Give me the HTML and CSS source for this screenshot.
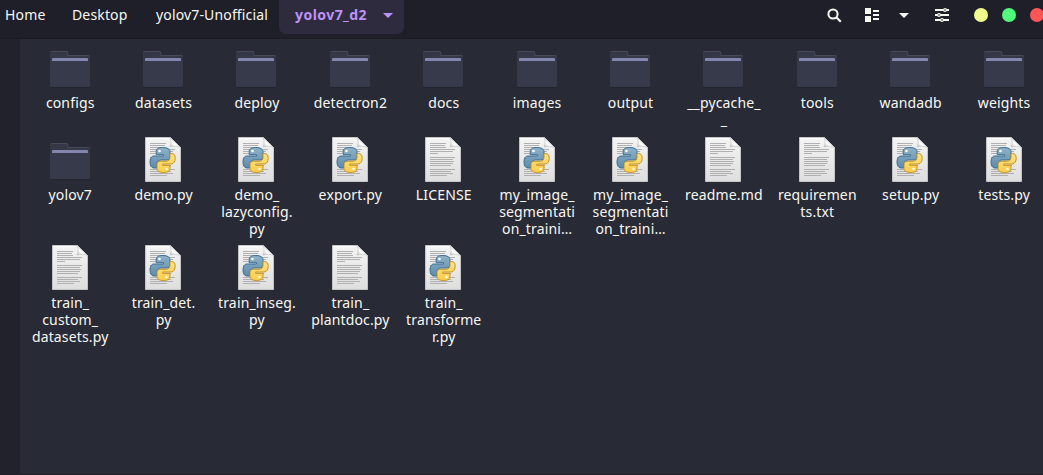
FILE: index.html
```html
<!DOCTYPE html>
<html lang="en">
<head>
<meta charset="utf-8">
<title>yolov7_d2</title>
<link rel="stylesheet" href="styles.css">
</head>
<body>
<svg class="defs" width="0" height="0">
  <defs>
    <linearGradient id="paper" x1="0" y1="0" x2="0" y2="1"><stop offset="0" stop-color="#f4f4f4"/><stop offset="1" stop-color="#dedede"/></linearGradient>
    <linearGradient id="fold" x1="0" y1="1" x2="1" y2="0"><stop offset="0" stop-color="#b4b4b4"/><stop offset=".35" stop-color="#fff"/><stop offset="1" stop-color="#d0d0d0"/></linearGradient>
    <linearGradient id="blue" x1="0" y1="0" x2="0" y2="1"><stop offset="0" stop-color="#8fb2c9"/><stop offset="1" stop-color="#5c8bab"/></linearGradient>
    <linearGradient id="gold" x1="0" y1="0" x2="0" y2="1"><stop offset="0" stop-color="#fce28c"/><stop offset="1" stop-color="#fbcd4a"/></linearGradient>
    <symbol id="folder" viewBox="0 0 48 48">
      <path d="M4 8.500a1.500 1.500 0 0 1 1.500-1.500h15.500a1.500 1.500 0 0 1 1 1.500V11h20.500a1.500 1.500 0 0 1 1.500 1.500V30H4z" fill="#343746"/>
      <path d="M4.500 8.500a1 1 0 0 1 1-1H21a1 1 0 0 1 .7 1v3h21a1 1 0 0 1 1 1" fill="none" stroke="#464958"/>
      <path d="M6 15a1 1 0 0 1 1-1h34a1 1 0 0 1 1 1v3H6z" fill="#8387ae"/>
      <path d="M4 17h40v25.500a1.500 1.500 0 0 1-1.500 1.500h-37A1.500 1.500 0 0 1 4 42.500z" fill="#22242e"/>
      <path d="M4 17h40v24.500a1.500 1.500 0 0 1-1.500 1.500h-37A1.500 1.500 0 0 1 4 41.500z" fill="#373a4b"/>
    </symbol>
    <symbol id="sheet" viewBox="0 0 48 48">
      <path d="M6.500 1.500h25l10 10v34h-35z" fill="url(#paper)" stroke="#c4c4c2"/>
      <path d="M7.500 2.500h23" stroke="#fff"/>
      <path d="M31 1.500c1.500 3 1.500 6 0 9.500 4-1.200 7-1 10.500.5z" fill="url(#fold)" stroke="#bdbdbd" stroke-width=".6"/>
    </symbol>
    <symbol id="text" viewBox="0 0 48 48">
      <use href="#sheet" width="48" height="48"/>
      <path d="M11 7.500h16M11 9.500h15M11 11.500h16M11 13.500h25M11 15.500h23M11 17.500h8M11 21.500h25M11 23.500h23M11 25.500h24M11 27.500h23M11 29.500h21M11 33.500h25M11 35.500h21M11 37.500h23M11 39.500h17" stroke="#b0b0b0"/>
    </symbol>
    <symbol id="python" viewBox="0 0 48 48">
      <use href="#sheet" width="48" height="48"/>
      <path d="M11 7.500h16M11 9.500h15M11 11.500h16M11 13.500h25M11 15.500h23M11 17.500h8M11 21.500h25M11 23.500h23M11 25.500h24M11 27.500h23M11 29.500h21M11 33.500h25M11 35.500h21M11 37.500h23M11 39.500h17" stroke="#b0b0b0"/>
      <path d="M23.500 11.500c-5 0-6.300 1.800-6.300 4.200v3h7.300V20h-9.700c-2.700 0-3.800 3.200-3.800 6.200s1.300 5.800 3.800 5.800H18v-3.600c0-2.800 1.900-4.400 4.500-4.400h5.300c2 0 3.200-1.500 3.200-3.400v-4.900c0-2.700-2.800-4.200-7.500-4.200z" fill="url(#blue)" stroke="#3d6e92"/>
      <path d="M24.500 36.500c5 0 6.500-1.800 6.500-4.200v-3h-7.300V28h8.500c2.800 0 4-3.200 4-5.800 0-3.500-1.500-4.700-4-4.700H31v3.800c0 2.300-1.400 3.900-4 3.900h-5.600c-2.200 0-3.400 1.500-3.400 3.400v4c0 2.600 2.500 3.900 6.500 3.900z" fill="url(#gold)" stroke="#c8941f"/>
      <circle cx="20.500" cy="15" r="1.300" fill="#fff"/>
      <circle cx="27.500" cy="33" r="1.300" fill="#fffbe0"/>
    </symbol>
  </defs>
</svg>
<div class="window">
  <header class="toolbar">
    <nav class="path">
      <span class="crumb home">Home</span>
      <span class="crumb desktop">Desktop</span>
      <span class="crumb unofficial">yolov7-Unofficial</span>
      <span class="crumb active"><span class="name">yolov7_d2</span><svg width="10" height="5"><path d="M0 0h10L5 5z" fill="#bd93f9"/></svg></span>
    </nav>
    <div class="tools">
      <svg class="search" width="16" height="16"><circle cx="6" cy="6" r="4.600" fill="none" stroke="#f8f8f2" stroke-width="2"/><path d="M9.300 9.300l4.500 4.500" stroke="#f8f8f2" stroke-width="2.200"/></svg>
      <svg class="view" width="14" height="14"><path d="M0 0h6v6H0zM0 8h6v6H0zM8 2h6v2H8zM8 6h6v2H8zM8 10h6v2H8z" fill="#f8f8f2"/></svg>
      <svg class="arrow" width="10" height="5"><path d="M0 0h10L5 5z" fill="#f8f8f2"/></svg>
      <svg class="settings" width="14" height="14"><path d="M0 2h14M0 7h14M0 12h14" stroke="#f8f8f2" stroke-width="2"/><g fill="#1e1f29" stroke="#f8f8f2" stroke-width="1.200"><circle cx="10" cy="2" r="1.400"/><circle cx="4" cy="7" r="1.400"/><circle cx="7" cy="12" r="1.400"/></g></svg>
      <span class="dot yellow"></span><span class="dot green"></span><span class="dot red"></span>
    </div>
  </header>
  <div class="body">
    <aside class="sidebar"></aside>
    <main class="files">
      <div class="file"><svg><use href="#folder"/></svg><p>configs</p></div>
      <div class="file"><svg><use href="#folder"/></svg><p>datasets</p></div>
      <div class="file"><svg><use href="#folder"/></svg><p>deploy</p></div>
      <div class="file"><svg><use href="#folder"/></svg><p>detectron2</p></div>
      <div class="file"><svg><use href="#folder"/></svg><p>docs</p></div>
      <div class="file"><svg><use href="#folder"/></svg><p>images</p></div>
      <div class="file"><svg><use href="#folder"/></svg><p>output</p></div>
      <div class="file"><svg><use href="#folder"/></svg><p>__pycache_<br>_</p></div>
      <div class="file"><svg><use href="#folder"/></svg><p>tools</p></div>
      <div class="file"><svg><use href="#folder"/></svg><p>wandadb</p></div>
      <div class="file"><svg><use href="#folder"/></svg><p>weights</p></div>
      <div class="file"><svg><use href="#folder"/></svg><p>yolov7</p></div>
      <div class="file"><svg><use href="#python"/></svg><p>demo.py</p></div>
      <div class="file"><svg><use href="#python"/></svg><p>demo_<br>lazyconfig.<br>py</p></div>
      <div class="file"><svg><use href="#python"/></svg><p>export.py</p></div>
      <div class="file"><svg><use href="#text"/></svg><p>LICENSE</p></div>
      <div class="file"><svg><use href="#python"/></svg><p>my_image_<br>segmentati<br>on_traini…</p></div>
      <div class="file"><svg><use href="#python"/></svg><p>my_image_<br>segmentati<br>on_traini…</p></div>
      <div class="file"><svg><use href="#text"/></svg><p>readme.md</p></div>
      <div class="file"><svg><use href="#text"/></svg><p>requiremen<br>ts.txt</p></div>
      <div class="file"><svg><use href="#python"/></svg><p>setup.py</p></div>
      <div class="file"><svg><use href="#python"/></svg><p>tests.py</p></div>
      <div class="file"><svg><use href="#text"/></svg><p>train_<br>custom_<br>datasets.py</p></div>
      <div class="file"><svg><use href="#python"/></svg><p>train_det.<br>py</p></div>
      <div class="file"><svg><use href="#python"/></svg><p>train_inseg.<br>py</p></div>
      <div class="file"><svg><use href="#text"/></svg><p>train_<br>plantdoc.py</p></div>
      <div class="file"><svg><use href="#python"/></svg><p>train_<br>transforme<br>r.py</p></div>
    </main>
  </div>
</div>
</body>
</html>
```
FILE: styles.css
```css
* { box-sizing: border-box; }
body { margin: 0; background: #282a36; color: #f8f8f2; font: 14px/17px "Noto Sans", "Open Sans", sans-serif; letter-spacing: .15px; overflow: hidden; }
.defs { display: block; height: 0; }
svg { display: block; flex: none; }
.window { width: 1043px; height: 475px; display: flex; flex-direction: column; border-bottom: 1px solid #1e1f29; overflow: hidden; }
.toolbar { height: 39px; flex: none; background: #1e1f29; border-bottom: 1px solid #1a1b23; display: flex; justify-content: space-between; }
.path { display: flex; align-items: flex-start; }
.crumb { height: 34px; line-height: 30px; white-space: nowrap; }
.home { width: 67px; padding-left: 5px; }
.desktop { width: 89px; padding-left: 5px; }
.unofficial { width: 123px; }
.active { width: 125px; padding-left: 16px; display: flex; align-items: center; background: #2f2b3f; border-radius: 0 0 7px 7px; color: #bd93f9; font-weight: 700; letter-spacing: .45px; }
.active .name { width: 88px; height: 34px; }
.active svg { margin-bottom: 3px; }
.tools { width: 216px; height: 30px; flex: none; display: flex; align-items: center; overflow: hidden; }
.search { margin-top: 2px; margin-right: 22px; }
.view { margin-right: 20px; }
.arrow { margin-right: 26px; }
.settings { margin-right: 25px; }
.dot { width: 14px; height: 14px; flex: none; margin-right: 14px; border-radius: 50%; }
.yellow { background: #f1fa8c; }
.green { background: #50fa7b; }
.red { background: #ff5555; }
.body { flex: 1; display: flex; min-height: 0; }
.sidebar { width: 20px; flex: none; background: #21222c; }
.files { flex: none; width: 1031px; padding: 5px 0 0 3px; display: grid; grid-template-columns: repeat(11, 93.4px); grid-template-rows: 92px 108px 108px; }
.file { display: flex; flex-direction: column; align-items: center; }
.file svg { width: 48px; height: 48px; }
.file p { margin: 2px 0 0; padding-left: 1px; text-align: center; white-space: nowrap; }
```
